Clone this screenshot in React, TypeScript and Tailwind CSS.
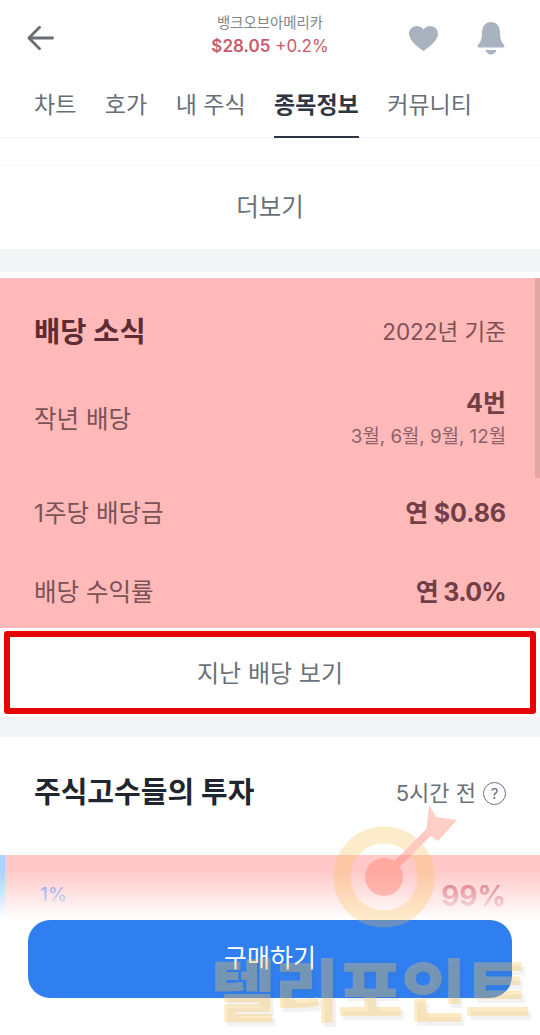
import React from "react";

function Row({ label, value, className, valueClass }: { label: string; value: string; className: string; valueClass: string }) {
  return (
    <div className={`flex items-center justify-between ${className}`}>
      <span className="text-[24.5px] leading-[32px] text-[#7a5257]">{label}</span>
      <span className={`text-[25px] leading-[32px] font-bold text-[#713f45] ${valueClass}`}>{value}</span>
    </div>
  );
}

export default function App() {
  return (
    <div className="relative w-[540px] h-[1035px] overflow-hidden bg-white font-['Inter','Noto_Sans_CJK_KR',sans-serif]">
      {/* Header */}
      <header className="grid h-[76px] grid-cols-[1fr_auto_1fr] items-center px-[35px]">
        <svg className="-ml-[9px]" width="29" height="26" viewBox="0 0 30 28" fill="none" stroke="#696e75" strokeWidth="3" strokeLinecap="round" strokeLinejoin="round">
          <path d="M28 14H3M14 2.500 2.500 14 14 25.500" />
        </svg>
        <div className="flex flex-col items-center pb-[6px]">
          <span className="text-[14.4px] leading-[20px] text-[#80858c]">뱅크오브아메리카</span>
          <span className="mt-[2px] text-[17px] leading-[22px] text-[#c95a6b]">
            <span className="font-semibold">$28.05</span> +0.2%
          </span>
        </div>
        <div className="flex items-center justify-end gap-[38px]">
          <svg width="31" height="27" viewBox="0 0 32 30" fill="#a9b3bf" preserveAspectRatio="none">
            <path d="M16 29C13 26.500 1 18.500 1 9.500 1 4.500 5 1 9 1c3 0 5.500 1.500 7 4 1.500-2.500 4-4 7-4 4 0 8 3.500 8 8.500C31 18.500 19 26.500 16 29Z" />
          </svg>
          <svg width="28" height="33" viewBox="0 0 28 33" fill="#a9b3bf">
            <path d="M14 0C7.500 0 5 5.500 5 11c0 6-1.500 9-4 12-.8 1-.4 2.500 1 2.500h24c1.400 0 1.800-1.500 1-2.500-2.500-3-4-6-4-12 0-5.500-2.500-11-9-11Z" />
            <path d="M8.500 28h11c-.5 2.500-3 4.500-5.500 4.500S9 30.500 8.500 28Z" />
          </svg>
        </div>
      </header>

      {/* Tabs */}
      <nav className="flex h-[62px] gap-[28.5px] border-b border-[#f0f1f3] pl-[34px] text-[23px] text-[#686e76]">
        <span className="pt-[13px] leading-[32px]">차트</span>
        <span className="pt-[13px] leading-[32px]">호가</span>
        <span className="pt-[13px] leading-[32px]">내 주식</span>
        <span className="h-[62px] border-b-[2px] border-[#2b3440] pt-[13px] font-bold leading-[32px] text-[#2f3742]">종목정보</span>
        <span className="pt-[13px] leading-[32px]">커뮤니티</span>
      </nav>

      <div className="h-[28px] border-b border-[#f5f6f7]" />

      {/* More */}
      <div className="flex h-[83px] items-center justify-center text-[24.5px] text-[#6b7178]">더보기</div>
      <div className="h-[23px] bg-[#f2f4f6]" />
      <div className="h-[6px] bg-white" />

      {/* Dividend */}
      <section className="relative h-[350px] bg-[#ffb9b9] px-[34px]">
        <div className="absolute right-0 top-0 h-[200px] w-[5px] bg-[#e5a6a6]" />
        <div className="flex items-center justify-between pt-[36px]">
          <h2 className="text-[28.5px] font-bold leading-[36px] text-[#5f2b34]">배당 소식</h2>
          <span className="text-[22.5px] leading-[32px] text-[#7f5157]">2022년 기준</span>
        </div>
        <div className="mt-[37px] flex items-center justify-between">
          <span className="text-[24.5px] leading-[32px] text-[#7a5257]">작년 배당</span>
          <div className="flex flex-col items-end">
            <span className="text-[25px] font-bold leading-[32px] text-[#713f45]">4번</span>
            <span className="mt-[5px] text-[18.8px] leading-[26px] text-[#8c6267]">3월, 6월, 9월, 12월</span>
          </div>
        </div>
        <Row label="1주당 배당금" value="연 $0.86" className="mt-[47px]" valueClass="tracking-[-0.1px]" />
        <Row label="배당 수익률" value="연 3.0%" className="mt-[47px]" valueClass="tracking-[-0.7px]" />
      </section>

      {/* Past dividends */}
      <div className="px-[4px] pt-[3px]">
        <div className="flex h-[83px] items-center justify-center rounded-[3px] border-[6px] border-[#e60505] bg-white pt-[2px] text-[24px] text-[#6b7178]">
          지난 배당 보기
        </div>
      </div>
      <div className="mt-[3px] h-[20px] bg-[#f2f4f6]" />

      {/* Investors */}
      <section className="flex items-center justify-between px-[34px] pt-[36px]">
        <h2 className="text-[29px] font-bold leading-[40px] text-[#1f2630]">주식고수들의 투자</h2>
        <div className="flex items-center gap-[7px] text-[22px] text-[#6b7178]">
          <span>5시간 전</span>
          <span className="flex h-[23px] w-[23px] items-center justify-center rounded-full border-[1.5px] border-[#6b7178] text-[15px] leading-none">?</span>
        </div>
      </section>
      <div className="mt-[42px] flex h-[64px]">
        <div className="w-[5px] bg-[#a8d4ff]" />
        <div className="flex flex-1 items-end justify-between bg-[#ffc9c9] pb-[7px] pl-[35px] pr-[34px]">
          <span className="mb-[4px] text-[19px] font-medium leading-[26px] text-[#6c8fe0]">1%</span>
          <span className="text-[28px] font-bold leading-[32px] text-[#d9606c]">99%</span>
        </div>
      </div>

      {/* Bottom fade and CTA */}
      <div className="absolute inset-x-0 bottom-0 h-[180px] bg-gradient-to-b from-white/0 from-[9%] to-white to-[36%]" />
      <button className="absolute left-[28px] top-[920px] flex h-[78px] w-[484px] items-center justify-center rounded-[22px] bg-[#2f7ff0] text-[25px] text-white">
        구매하기
      </button>

      {/* Watermark */}
      <svg className="pointer-events-none absolute left-[330px] top-[805px] opacity-40" width="130" height="128" viewBox="0 0 130 128" fill="none">
        <circle cx="54" cy="72" r="42" stroke="#fbbf4d" strokeWidth="17" opacity="0.7" />
        <circle cx="54" cy="72" r="19" fill="#ff7a66" />
        <path d="M54 72 104 22" stroke="#ff7a66" strokeWidth="8" />
        <path d="M99 0 106 12 127 15 108 36 96 28Z" fill="#ff8a76" />
      </svg>
      <div className="pointer-events-none absolute left-[218px] top-[947px] scale-x-[1.05] whitespace-nowrap text-[68px] font-black leading-[88px] tracking-[-2px] text-[#f7c65a]/35 [text-shadow:3px_4px_0_rgba(90,90,90,0.08)]">
        텔리포인트
      </div>
    </div>
  );
}
